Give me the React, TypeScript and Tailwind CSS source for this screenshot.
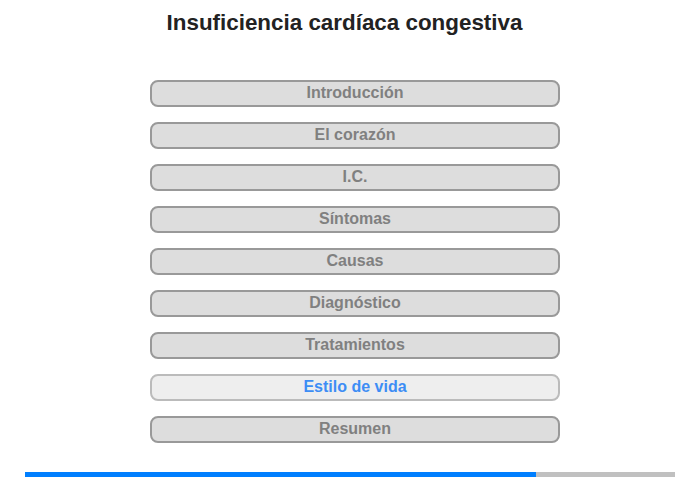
const sections = [
  'Introducción',
  'El corazón',
  'I.C.',
  'Síntomas',
  'Causas',
  'Diagnóstico',
  'Tratamientos',
  'Estilo de vida',
  'Resumen',
]

const current = 7

export default function App() {
  return (
    <div className="w-[700px] h-[480px] bg-white font-['Liberation_Sans',Arial,sans-serif] overflow-hidden">
      <h1 className="pt-[10px] h-[35px] pr-[11px] text-center text-[22.4px] leading-[25px] font-bold text-[#222]">
        Insuficiencia cardíaca congestiva
      </h1>
      <div className="mt-[45px] ml-[150px] w-[410px] flex flex-col gap-[15px]">
        {sections.map((s, i) => (
          <button
            key={s}
            className={
              i === current
                ? 'h-[27px] rounded-[8px] border-2 border-[#bbb] bg-[#eee] text-[#3d8df5] text-[16px] leading-[21px] pb-[2px] font-bold text-center'
                : 'h-[27px] rounded-[8px] border-2 border-[#999] bg-[#ddd] text-[#808080] text-[16px] leading-[21px] pb-[2px] font-bold text-center'
            }
          >
            {s}
          </button>
        ))}
      </div>
      <div className="mt-[29px] ml-[25px] w-[650px] h-[5px] bg-[#c0c0c0] flex">
        <div className="w-[511px] h-full bg-[#007fff]" />
      </div>
    </div>
  )
}
